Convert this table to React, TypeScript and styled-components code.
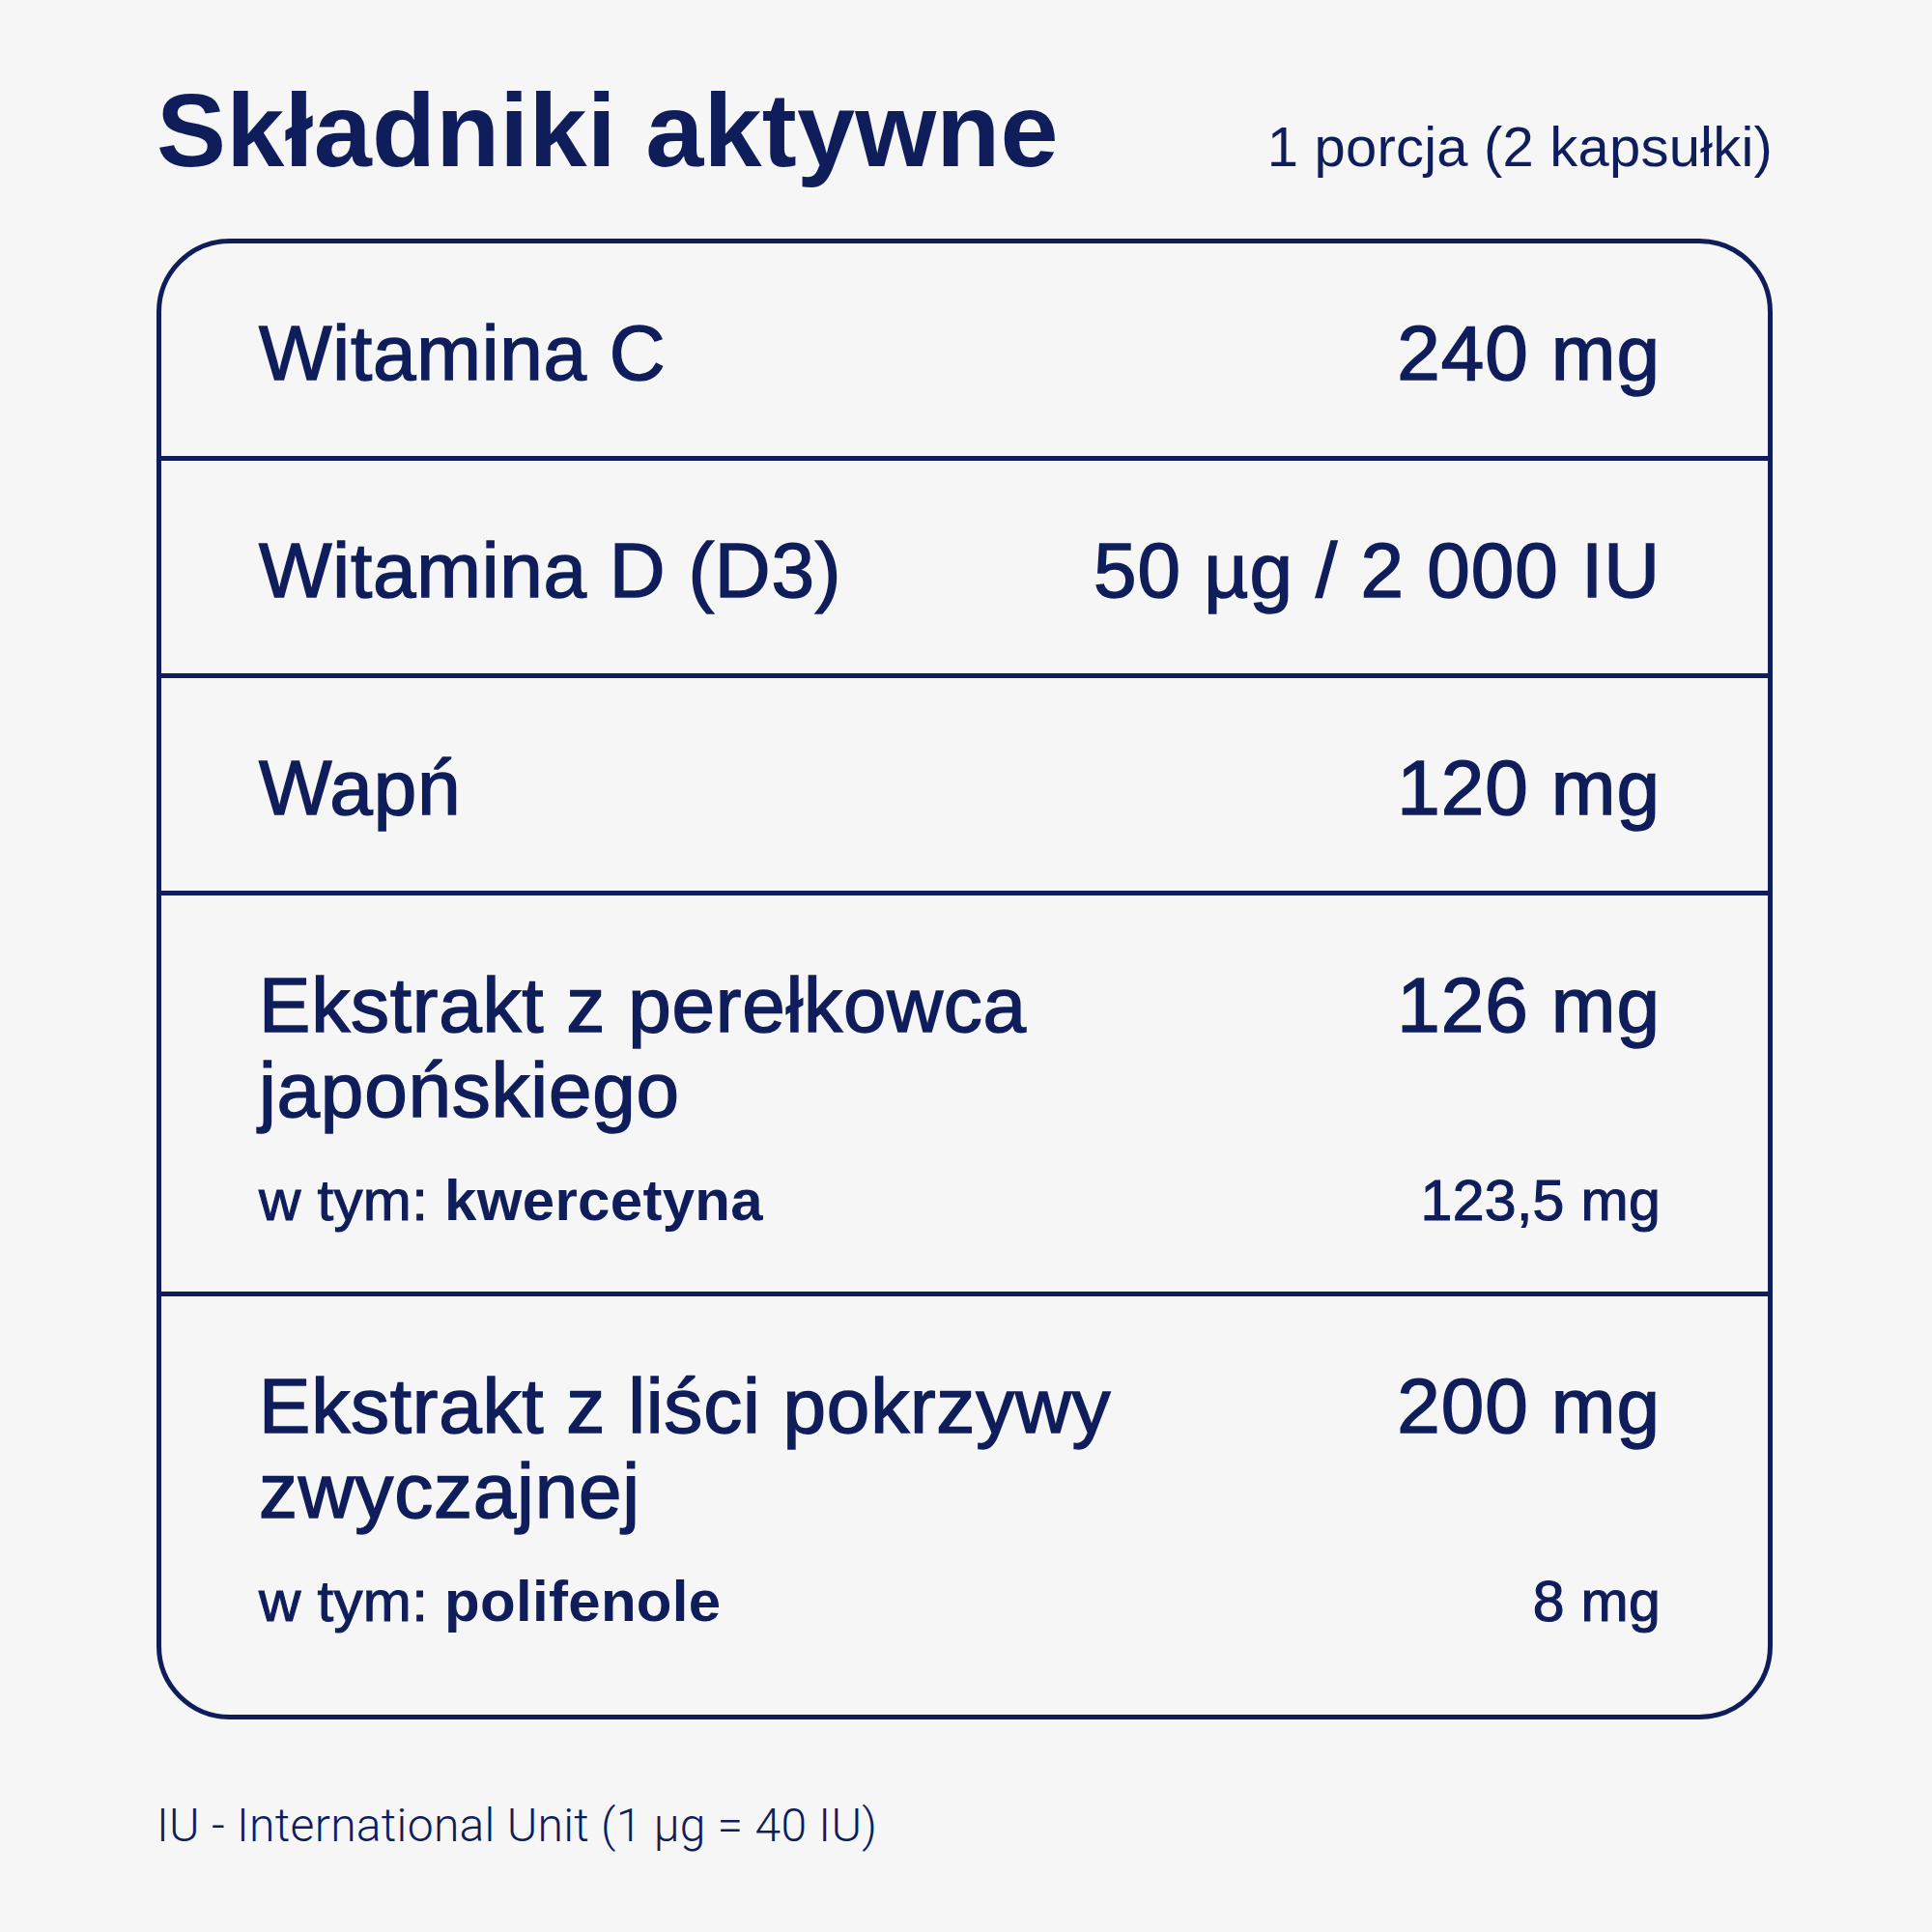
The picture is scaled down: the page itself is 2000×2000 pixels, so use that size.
import React from "react";
import styled, { createGlobalStyle } from "styled-components";

const NAVY = "#0f1e5b";

const GlobalStyle = createGlobalStyle`
  html, body {
    margin: 0;
    padding: 0;
    background: #f6f6f7;
  }
  body {
    font-family: "Liberation Sans", Arial, sans-serif;
    color: ${NAVY};
  }
`;

const Page = styled.main`
  width: 2000px;
  min-height: 2000px;
  box-sizing: border-box;
  padding: 81px 0 0 162px;
`;

const Sheet = styled.div`
  width: 1673px;
`;

const Header = styled.header`
  display: flex;
  justify-content: space-between;
  align-items: baseline;
`;

const Title = styled.h1`
  margin: 0;
  font-size: 108px;
  line-height: 108px;
  font-weight: 700;
  letter-spacing: 0.2px;
`;

const Serving = styled.div`
  font-size: 58px;
  line-height: 58px;
  font-weight: 400;
  letter-spacing: 0.2px;
`;

const Table = styled.section`
  margin-top: 58px;
  border: 5px solid ${NAVY};
  border-radius: 76px;
`;

const Row = styled.div<{ $last?: boolean }>`
  display: grid;
  grid-template-columns: minmax(0, 1fr) auto;
  column-gap: 40px;
  row-gap: 38px;
  align-items: start;
  padding: 70px 111px ${(p) => (p.$last ? 85 : 62)}px 101px;

  & + & {
    border-top: 5px solid ${NAVY};
  }
`;

const Name = styled.div`
  max-width: 1000px;
  font-size: 80px;
  line-height: 88px;
  font-weight: 400;
  letter-spacing: 0.8px;
  -webkit-text-stroke: 1.5px ${NAVY};
`;

const Amount = styled.div`
  justify-self: end;
  text-align: right;
  white-space: nowrap;
  font-size: 80px;
  line-height: 88px;
  font-weight: 400;
  letter-spacing: 1px;
  -webkit-text-stroke: 1.5px ${NAVY};
`;

const SubName = styled.div`
  font-size: 60px;
  line-height: 64px;
  font-weight: 400;
  letter-spacing: 0.3px;
  -webkit-text-stroke: 1.1px ${NAVY};

  strong {
    font-weight: 700;
    -webkit-text-stroke: 0;
  }
`;

const SubAmount = styled.div`
  justify-self: end;
  text-align: right;
  white-space: nowrap;
  font-size: 59px;
  line-height: 64px;
  font-weight: 400;
  letter-spacing: 0.3px;
  -webkit-text-stroke: 1.1px ${NAVY};
`;

const Footnote = styled.p`
  margin: 81px 0 0;
  font-family: Roboto, "Liberation Sans", sans-serif;
  font-weight: 300;
  font-size: 48px;
  line-height: 58px;
  letter-spacing: 0.3px;
`;

type Ingredient = {
  name: string;
  amount: string;
  sub?: { label: string; name: string; amount: string };
};

const ingredients: Ingredient[] = [
  { name: "Witamina C", amount: "240 mg" },
  { name: "Witamina D (D3)", amount: "50 µg / 2 000 IU" },
  { name: "Wapń", amount: "120 mg" },
  {
    name: "Ekstrakt z perełkowca japońskiego",
    amount: "126 mg",
    sub: { label: "w tym: ", name: "kwercetyna", amount: "123,5 mg" },
  },
  {
    name: "Ekstrakt z liści pokrzywy zwyczajnej",
    amount: "200 mg",
    sub: { label: "w tym: ", name: "polifenole", amount: "8 mg" },
  },
];

export default function App() {
  return (
    <>
      <GlobalStyle />
      <Page>
        <Sheet>
          <Header>
            <Title>Składniki aktywne</Title>
            <Serving>1 porcja (2 kapsułki)</Serving>
          </Header>
          <Table>
            {ingredients.map((item, i) => (
              <Row key={item.name} $last={i === ingredients.length - 1}>
                <Name>{item.name}</Name>
                <Amount>{item.amount}</Amount>
                {item.sub && (
                  <>
                    <SubName>
                      {item.sub.label}
                      <strong>{item.sub.name}</strong>
                    </SubName>
                    <SubAmount>{item.sub.amount}</SubAmount>
                  </>
                )}
              </Row>
            ))}
          </Table>
          <Footnote>IU - International Unit (1 µg = 40 IU)</Footnote>
        </Sheet>
      </Page>
    </>
  );
}
